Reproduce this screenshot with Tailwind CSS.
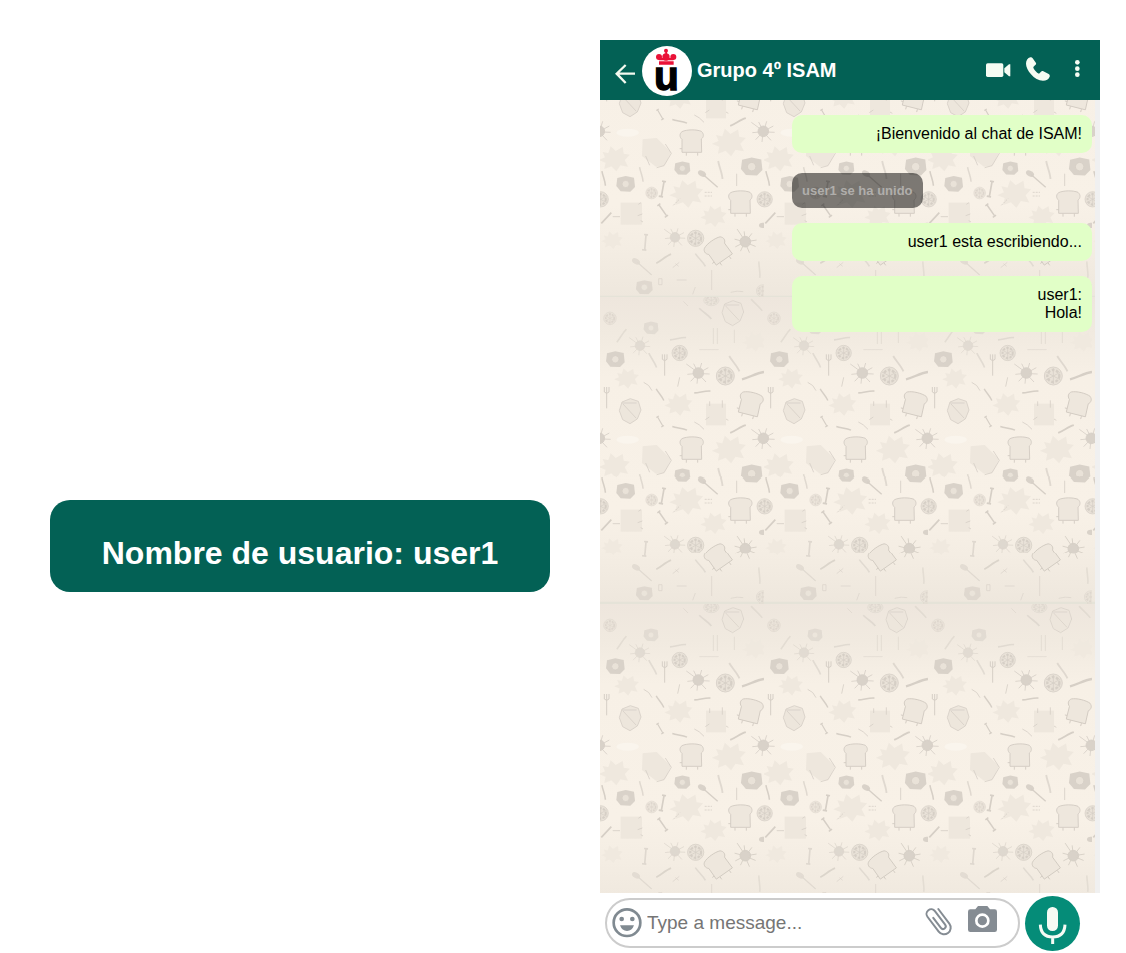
<!DOCTYPE html>
<html lang="es">
<head>
<meta charset="utf-8">
<meta name="viewport" content="width=device-width, initial-scale=1">
<title>Grupo 4º ISAM</title>
<script src="https://cdn.jsdelivr.net/npm/@tailwindcss/browser@4"></script>
</head>
<body class="bg-white font-['Liberation_Sans',Arial,sans-serif] text-black">
<div class="flex min-h-screen gap-[50px] pt-10 pr-[26px] pl-[50px]">
  <aside class="min-w-0 flex-1 pt-[460px]">
    <h1 class="rounded-[20px] bg-[#036155] px-5 pt-[35px] pb-[21px] text-center text-[32px] leading-9 font-bold text-white">Nombre de usuario: user1</h1>
  </aside>

  <main class="flex min-w-0 flex-1 flex-col">
    <header class="flex h-[60px] items-center bg-[#036155] pt-[2px] pr-4 pl-[14px]">
      <button type="button" aria-label="Volver" class="mr-[6px]">
        <svg class="block h-[28px] w-[22px]" viewBox="42 51 66 84" fill="none" stroke="#f4faf0" stroke-width="7"><path d="M105 101H52M77 75 50 101 77 129"/></svg>
      </button>
      <svg class="mr-[5px] size-[50px] shrink-0 overflow-visible" viewBox="126 18 150 150" role="img" aria-label="Logo">
        <circle cx="201" cy="93" r="75" fill="#fff"/>
        <g fill="#ea1238">
          <circle cx="198" cy="32" r="6"/><path d="M196 34h5v10h-5z"/>
          <circle cx="177" cy="51" r="9"/><circle cx="198" cy="51" r="11"/><circle cx="220" cy="51" r="9"/>
          <path d="M174 54h49l-3 7h-43zM177 64h44v10h-44z"/>
        </g>
        <text x="199" y="149" text-anchor="middle" font-size="122" font-weight="700" fill="#000" stroke="#000" stroke-width="4">u</text>
      </svg>
      <h2 class="flex-1 pb-[2px] text-[20px] leading-6 font-bold text-white">Grupo 4º ISAM</h2>
      <button type="button" aria-label="Videollamada" class="mr-[13px]">
        <svg class="block h-[28px] w-[26px]" viewBox="48 51 78 84" fill="#f6fcf3"><rect x="48" y="70" width="52" height="41" rx="5"/><path d="M103 85 117 73h4v36h-4l-14-12z"/></svg>
      </button>
      <button type="button" aria-label="Llamar" class="mr-[21px]">
        <svg class="block h-[28px] w-[26px]" viewBox="165 51 78 84" fill="#f6fcf3"><path d="M181 52c3-1 5 0 7 3l10 14c1 3 0 5-3 7l-5 5c-1 5 11 19 17 20l6-6c2-2 5-2 7-1l16 8c3 2 4 5 3 8-3 8-10 12-20 12-13 0-26-7-36-19-9-10-15-22-15-32 0-9 5-17 13-19Z"/></svg>
      </button>
      <button type="button" aria-label="Más opciones">
        <svg class="block h-[28px] w-[12px]" viewBox="306 51 36 84" fill="#f6fcf3"><circle cx="322" cy="67" r="7"/><circle cx="322" cy="86" r="7"/><circle cx="322" cy="104" r="7"/></svg>
      </button>
    </header>

    <section aria-label="Mensajes" class="relative isolate flex-1 bg-[#f0f0f0] pt-[15px] pr-2">
      <div class="absolute inset-y-0 right-[5px] left-0 -z-10 overflow-hidden">
        <svg class="block size-full" aria-hidden="true">
          <defs>
            <linearGradient id="paper" x1="0" y1="0" x2="0" y2="1">
              <stop offset="0" stop-color="#eee6dd"/><stop offset=".12" stop-color="#f1eae0"/><stop offset=".26" stop-color="#f7f0e6"/><stop offset=".7" stop-color="#f8f1e7"/><stop offset=".84" stop-color="#f4ede3"/><stop offset="1" stop-color="#eee7dd"/>
            </linearGradient>
            <g id="splat"><circle r="16" fill="#d9d2c9"/><path d="M-36-27-10-8M-14-28-5-10M10-30 4-10M30-16 10-5M34 3 10 2M23 27 7 10M-4 32-2 12M-23 25-8 9M-33 4-12 2"/></g>
            <g id="slice"><circle r="27" fill="#e9e2d8"/><circle r="18" stroke-dasharray="8 5" stroke-width="7"/><path d="M-22-12 22 12M-22 12 22-12M0-24V24"/></g>
            <g id="toast"><path fill="#eee7dd" stroke="#cfc8bf" d="M-29-33C-15-40 15-40 29-34 38-26 36-16 29-11L30 29H-29V-10C-38-18-36-28-29-33ZM-16 30v9M18 30v9M-29 18h-7"/></g>
            <g id="egg"><path fill="#d9d2c9" stroke="none" d="M-25-18 0-24 25-19 28 9 14 23-15 22-28 6Z"/><circle r="11" fill="#e9e2d8"/></g>
            <g id="fork"><path d="M-7-30v15q7 8 14 0v-15M0-30V34" stroke-width="3"/></g>
            <g id="spoon"><ellipse cx="-19" cy="-17" rx="13" ry="8" transform="rotate(30 -19 -17)" fill="#d9d2c9" stroke="none"/><path d="M-15-14 28 24" stroke-width="4"/></g>
            <g id="stick"><path d="M-33 11C-10 5 10-8 33-11" stroke-width="7"/></g>
            <g id="bone"><path d="M-6-24H6M0-22V20M-8 22H5" stroke-width="5"/></g>
            <g id="stain"><path fill="#efe8de" stroke="none" d="m-38-19 17 4 7-21 15 14 21-12 3 20 18 3-15 16 10 20-23-4-12 18-15-15-21 8 4-19-20-8 18-8Z"/></g>
            <g id="pot"><path fill="#ede6dc" d="M-25-29 0-39 24-31 32-5 21 22-1 36-23 24-33-3ZM-22-23 18 20M-25-26H19"/></g>
            <pattern id="food" width="492" height="921" patternUnits="userSpaceOnUse" patternTransform="translate(0 504) scale(.3333333)">
              <rect width="492" height="921" fill="url(#paper)"/>
              <path d="M0 919h492" stroke="#e4e3d7" stroke-width="3"/>
              <g transform="translate(0 -12)" fill="none" stroke="#d6cfc6" stroke-width="2.5">
                <use href="#slice" transform="translate(30 76) scale(.7)" opacity=".7"/>
                <use href="#stick" transform="translate(65 128) rotate(-35) scale(.7)" opacity=".5"/>
                <use href="#egg" transform="translate(153 105) scale(.8)" opacity=".6"/>
                <use href="#splat" transform="translate(120 158) scale(.9)" opacity=".65"/>
                <use href="#stick" transform="translate(234 137) rotate(10) scale(.7)" opacity=".6"/>
                <use href="#stick" transform="translate(316 62) rotate(60) scale(.7)" opacity=".6"/>
                <use href="#slice" transform="translate(334 22) scale(.85 .6)" opacity=".65"/>
                <use href="#pot" transform="translate(399 62)" opacity=".85"/>
                <use href="#stick" transform="translate(470 36) rotate(65) scale(.7)" opacity=".5"/>
                <path d="M298 170h58M340 105v48M352 105v48M250 25l14 14M403 110v40" opacity=".6"/>
                <use href="#stain" transform="translate(465 145) scale(.8)" opacity=".6"/>
                <use href="#slice" transform="translate(239 180) scale(.85)"/>
                <use href="#egg" transform="translate(46 199)"/>
                <use href="#stick" transform="translate(158 202) rotate(80) scale(.7)" opacity=".6"/>
                <use href="#fork" transform="translate(194 214)"/>
                <use href="#splat" transform="translate(295 240)"/>
                <use href="#slice" transform="translate(376 249)"/>
                <use href="#stick" transform="translate(403 212) rotate(75) scale(.8)" opacity=".7"/>
                <use href="#stick" transform="translate(459 248)"/>
                <use href="#stain" transform="translate(82 255) scale(.8)"/>
                <path d="M131 268q18 7 25 25M239 253l-6 28M283 387q15 6 29 22"/>
                <use href="#fork" transform="translate(20 312)"/>
                <use href="#stick" transform="translate(180 305) rotate(75) scale(.6)"/>
                <use href="#stick" transform="translate(307 297) rotate(12) scale(.7)"/>
                <use href="#stain" transform="translate(238 333) scale(.9)"/>
                <use href="#pot" transform="translate(91 356)"/>
                <path fill="#eee7dd" stroke="none" d="M318 332h60v65h-60z"/><path d="M329 325v14M367 322v22M316 380l12-8M378 378l7 4"/>
                <use href="#toast" transform="translate(450 336) rotate(14)"/>
                <use href="#bone" transform="translate(181 386) rotate(-30) scale(.7)"/>
                <use href="#stick" transform="translate(239 406) rotate(32) scale(.65)"/>
                <use href="#stick" transform="translate(414 408) rotate(-8) scale(.75)"/>
                <use href="#splat" transform="translate(490 436)"/><use href="#splat" transform="translate(-2 436)"/>
                <ellipse cx="83" cy="440" rx="34" ry="12" fill="#faf5ed" stroke="none"/>
                <use href="#toast" transform="translate(275 470)"/>
                <use href="#stain" transform="translate(390 468) scale(1.1)"/>
                <use href="#stain" transform="translate(46 517)"/>
                <path fill="#eee7dd" stroke="none" d="m128 460 42-4 43 43-20 40-25 3-42-32Z"/><path d="m196 474 18 28-22 37-22 6M137 510l12 28"/>
                <use href="#egg" transform="translate(247 547) scale(.85)"/>
                <use href="#egg" transform="translate(455 542) scale(1.15)"/>
                <use href="#stick" transform="translate(361 552) rotate(95) scale(.8)" opacity=".7"/>
                <use href="#spoon" transform="translate(325 580)"/>
                <use href="#stick" transform="translate(124 565) rotate(95) scale(.65)" opacity=".7"/>
                <path d="M410 563v37"/>
                <use href="#stick" transform="translate(11 577) rotate(95) scale(.65)"/>
                <use href="#egg" transform="translate(77 594)"/>
                <use href="#bone" transform="translate(188 610) rotate(10)"/>
                <use href="#slice" transform="translate(155 621) scale(.65)" opacity=".8"/>
                <use href="#stain" transform="translate(262 622) scale(1.1)"/>
                <path d="M220 658l20-20M314 619h22M314 630h22" stroke-dasharray="6 3"/>
                <use href="#toast" transform="translate(421 653)"/>
                <use href="#slice" transform="translate(494 640) scale(.85)"/><use href="#slice" transform="translate(2 640) scale(.85)"/>
                <path fill="#eee7dd" stroke="none" d="M62 650h64v66H62z"/><path d="M115 655l8-5M113 689l14-5M122 704l7 4M38 692h22"/>
                <use href="#bone" transform="translate(189 674) rotate(-35) scale(.9)"/>
                <use href="#stain" transform="translate(343 690) scale(.85)"/>
                <path d="M34 680 4 712M525 680l-30 32" stroke-width="5"/>
                <ellipse cx="488" cy="718" rx="11" ry="8" fill="#d9d2c9" stroke="none"/>
                <use href="#splat" transform="translate(225 754) scale(.9)" opacity=".8"/>
                <use href="#slice" transform="translate(287 757) scale(.9)"/>
                <use href="#splat" transform="translate(436 767) rotate(20)"/>
                <use href="#stain" transform="translate(38 762) scale(.7)" opacity=".7"/>
                <use href="#bone" transform="translate(136 770) rotate(5)" opacity=".7"/>
                <use href="#toast" transform="translate(356 797) rotate(-35)"/>
                <use href="#stick" transform="translate(191 818) rotate(-13) scale(.75)" opacity=".8"/>
                <use href="#stick" transform="translate(301 822) rotate(70) scale(.7)" opacity=".6"/>
                <path d="M218 845l20-16M226 833l10 8M335 852v60" opacity=".7"/>
                <use href="#spoon" transform="translate(127 843)" opacity=".6"/>
                <use href="#stick" transform="translate(478 851) rotate(105) scale(.7)" opacity=".5"/>
                <use href="#egg" transform="translate(133 904) scale(.9)" opacity=".7"/>
                <path d="M176 878h10v18h-10zM230 882h30M392 919q20-6 38-2M286 903l-8 22" opacity=".7"/>
                <use href="#slice" transform="translate(488 915) scale(.7)" opacity=".7"/>
              </g>
            </pattern>
          </defs>
          <rect width="100%" height="100%" fill="url(#food)"/>
        </svg>
      </div>

      <div class="ml-auto flex w-full max-w-[300px] flex-col items-start gap-[15px] text-[16px] leading-[18px]">
        <p class="w-full rounded-[10px] bg-[#e1ffc7] p-[10px] text-right">¡Bienvenido al chat de ISAM!</p>
        <p class="mt-[5px] rounded-[10px] bg-black/50 p-[10px] text-[13px] leading-[15px] font-bold text-[#b0aeab]">user1 se ha unido</p>
        <p class="w-full rounded-[10px] bg-[#e1ffc7] p-[10px] text-right">user1 esta escribiendo...</p>
        <p class="w-full rounded-[10px] bg-[#e1ffc7] p-[10px] text-right">user1:<br>Hola!</p>
      </div>
    </section>

    <form class="flex h-[60px] items-center gap-[5px] pr-5 pl-[5px]">
      <div class="flex h-[50px] min-w-0 flex-1 items-center rounded-full border-2 border-[#ccc] pr-[21px] pl-[5px]">
        <button type="button" aria-label="Emojis" class="mr-[5px]">
          <svg class="block size-[30px]" viewBox="49 59 90 90"><circle cx="94" cy="103" r="40" fill="none" stroke="#808a91" stroke-width="8"/><g fill="#808a91"><circle cx="78" cy="92" r="7"/><circle cx="110" cy="92" r="7"/><path d="M73 111h42q-6 17-21 17t-21-17Z"/></g></svg>
        </button>
        <input type="text" aria-label="Mensaje" placeholder="Type a message..." class="min-w-0 flex-1 text-[19px] leading-6 outline-none placeholder:text-[#757575]">
        <button type="button" aria-label="Adjuntar" class="mr-[15px]">
          <svg class="block h-[34px] w-[28px]" viewBox="75 54 84 102" fill="none" stroke="#858c93" stroke-width="6" stroke-linecap="round"><path transform="translate(117 99) rotate(-37)" d="M20-30V25A20 20 0 0 1-20 25V-31A14 14 0 0 1 8-31V20A8 8 0 0 1-8 20V-18"/></svg>
        </button>
        <button type="button" aria-label="Cámara">
          <svg class="block h-[34px] w-[29px]" viewBox="204 54 87 102"><path fill="#858c93" d="M234 54h28l8 10h14q7 0 7 7v54q0 7-7 7h-73q-7 0-7-7V71q0-7 7-7h15Z"/><circle cx="247" cy="98" r="18" fill="none" stroke="#fff" stroke-width="8"/></svg>
        </button>
      </div>
      <button type="button" aria-label="Grabar audio" class="size-[55px] shrink-0 rounded-full bg-[#058c78]">
        <svg class="block size-full" viewBox="375 21 165 165"><rect x="441" y="54" width="33" height="72" rx="16" fill="#f5fbf4"/><path d="M421 107c1 25 15 37 37 37s36-12 37-37M458 144v21" fill="none" stroke="#f5fbf4" stroke-width="9"/></svg>
      </button>
    </form>
  </main>
</div>
</body>
</html>
